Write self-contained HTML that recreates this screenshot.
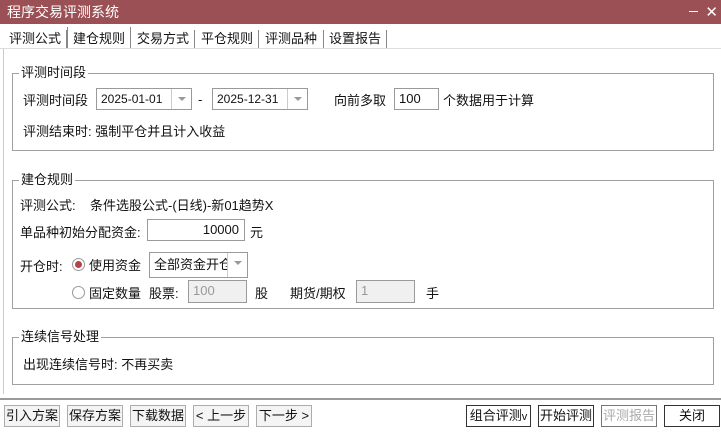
<!DOCTYPE html><html><head><meta charset="utf-8"><style>
*{margin:0;padding:0;box-sizing:border-box}
body{width:721px;height:434px;background:#fff;font-family:"Liberation Sans","Noto Sans CJK SC",sans-serif;font-size:13px;color:#111;position:relative;overflow:hidden}
.a{position:absolute;white-space:nowrap}
.title{left:0;top:0;width:721px;height:24px;background:#9a5054;color:#fff;font-size:14px;line-height:24px;padding-left:7px}
.grp{position:absolute;border:1px solid #a0a0a0}
.gt{position:absolute;top:-10px;left:6px;background:#fff;padding:0 2px;line-height:18px}
.in{position:absolute;border:1px solid #9a9a9a;background:#fff;height:22px;line-height:20px;padding-left:4px;font-family:"Liberation Sans","Noto Sans CJK SC",sans-serif;font-size:12px;white-space:nowrap}
.dd{position:absolute;right:0;top:0;width:20px;height:20px;border-left:1px solid #ccc;background:#fff}
.dd:after{content:"";position:absolute;left:6px;top:8px;border:4px solid transparent;border-top:4px solid #999}
.dis{background:#f0f0f0;color:#999}
.btn{position:absolute;top:405px;height:22px;border:1px solid #adadad;background:#f4f4f4;line-height:20px;text-align:center;white-space:nowrap;overflow:hidden}
.b2{border:1px solid #333;background:#fff}
.tab{position:absolute;top:30px;height:18px;line-height:18px;border-right:1px solid #888}
</style></head><body>
<div class="a title">程序交易评测系统</div>
<div class="a" style="right:23px;top:11px;width:9px;height:1px;background:#fff"></div>
<div class="a" style="right:3px;top:3px;color:#fff;font-size:15px">✕</div>
<div class="tab" style="left:9px;width:58px">评测公式</div>
<div class="tab" style="left:67px;top:27px;height:22px;width:64px;padding-left:5px;line-height:24px;border-left:1px solid #888">建仓规则</div>
<div class="tab" style="left:137px;width:58px">交易方式</div>
<div class="tab" style="left:201px;width:58px">平仓规则</div>
<div class="tab" style="left:265px;width:59px">评测品种</div>
<div class="tab" style="left:329px;width:58px">设置报告</div>
<div class="a" style="left:3px;top:48px;width:1px;height:346px;background:#ccc"></div>
<div class="a" style="left:0;top:48px;width:721px;height:1px;background:#ddd"></div>

<div class="grp" style="left:12px;top:73px;width:702px;height:78px"><div class="gt">评测时间段</div></div>
<div class="a" style="left:23px;top:90px">评测时间段</div>
<div class="in" style="left:96px;top:88px;width:96px">2025-01-01<div class="dd"></div></div>
<div class="a" style="left:198px;top:92px">-</div>
<div class="in" style="left:212px;top:88px;width:96px">2025-12-31<div class="dd"></div></div>
<div class="a" style="left:334px;top:90px">向前多取</div>
<div class="in" style="left:394px;top:88px;width:45px;font-size:13px">100</div>
<div class="a" style="left:443px;top:90px">个数据用于计算</div>
<div class="a" style="left:23px;top:121px">评测结束时: 强制平仓并且计入收益</div>

<div class="grp" style="left:12px;top:180px;width:702px;height:129px"><div class="gt">建仓规则</div></div>
<div class="a" style="left:20px;top:195px">评测公式:</div>
<div class="a" style="left:90px;top:195px">条件选股公式-(日线)-新01趋势X</div>
<div class="a" style="left:20px;top:222px">单品种初始分配资金:</div>
<div class="in" style="left:147px;top:219px;width:98px;text-align:right;padding-right:5px;font-size:13px">10000</div>
<div class="a" style="left:250px;top:222px">元</div>
<div class="a" style="left:20px;top:256px">开仓时:</div>
<div class="a" style="left:72px;top:258px;width:13px;height:13px;border:1px solid #999;border-radius:50%"><div style="position:absolute;left:2px;top:2px;width:7px;height:7px;border-radius:50%;background:#b5434a"></div></div>
<div class="a" style="left:89px;top:255px">使用资金</div>
<div class="in" style="left:149px;top:252px;width:99px;height:26px;line-height:24px;font-size:13px;overflow:hidden">全部资金开仓<div class="dd" style="height:24px"></div></div>
<div class="a" style="left:72px;top:286px;width:13px;height:13px;border:1px solid #999;border-radius:50%"></div>
<div class="a" style="left:89px;top:283px">固定数量</div>
<div class="a" style="left:149px;top:283px">股票:</div>
<div class="in dis" style="left:188px;top:280px;width:59px;height:23px;font-size:13px">100</div>
<div class="a" style="left:255px;top:283px">股</div>
<div class="a" style="left:290px;top:283px">期货/期权</div>
<div class="in dis" style="left:356px;top:280px;width:59px;height:23px;font-size:13px">1</div>
<div class="a" style="left:426px;top:283px">手</div>

<div class="grp" style="left:12px;top:337px;width:702px;height:48px"><div class="gt">连续信号处理</div></div>
<div class="a" style="left:23px;top:354px">出现连续信号时: 不再买卖</div>

<div class="a" style="left:0;top:398px;width:721px;height:2px;background:#9a9a9a"></div>
<div class="btn" style="left:4px;width:56px">引入方案</div>
<div class="btn" style="left:67px;width:56px">保存方案</div>
<div class="btn" style="left:130px;width:56px">下载数据</div>
<div class="btn" style="left:193px;width:56px">&lt; 上一步</div>
<div class="btn" style="left:256px;width:56px">下一步 &gt;</div>
<div class="btn b2" style="left:466px;width:65px">组合评测<span style="font-size:11px">v</span></div>
<div class="btn b2" style="left:538px;width:56px">开始评测</div>
<div class="btn b2" style="left:601px;width:56px;color:#aaa;border-color:#777">评测报告</div>
<div class="btn b2" style="left:664px;width:56px">关闭</div>
</body></html>
